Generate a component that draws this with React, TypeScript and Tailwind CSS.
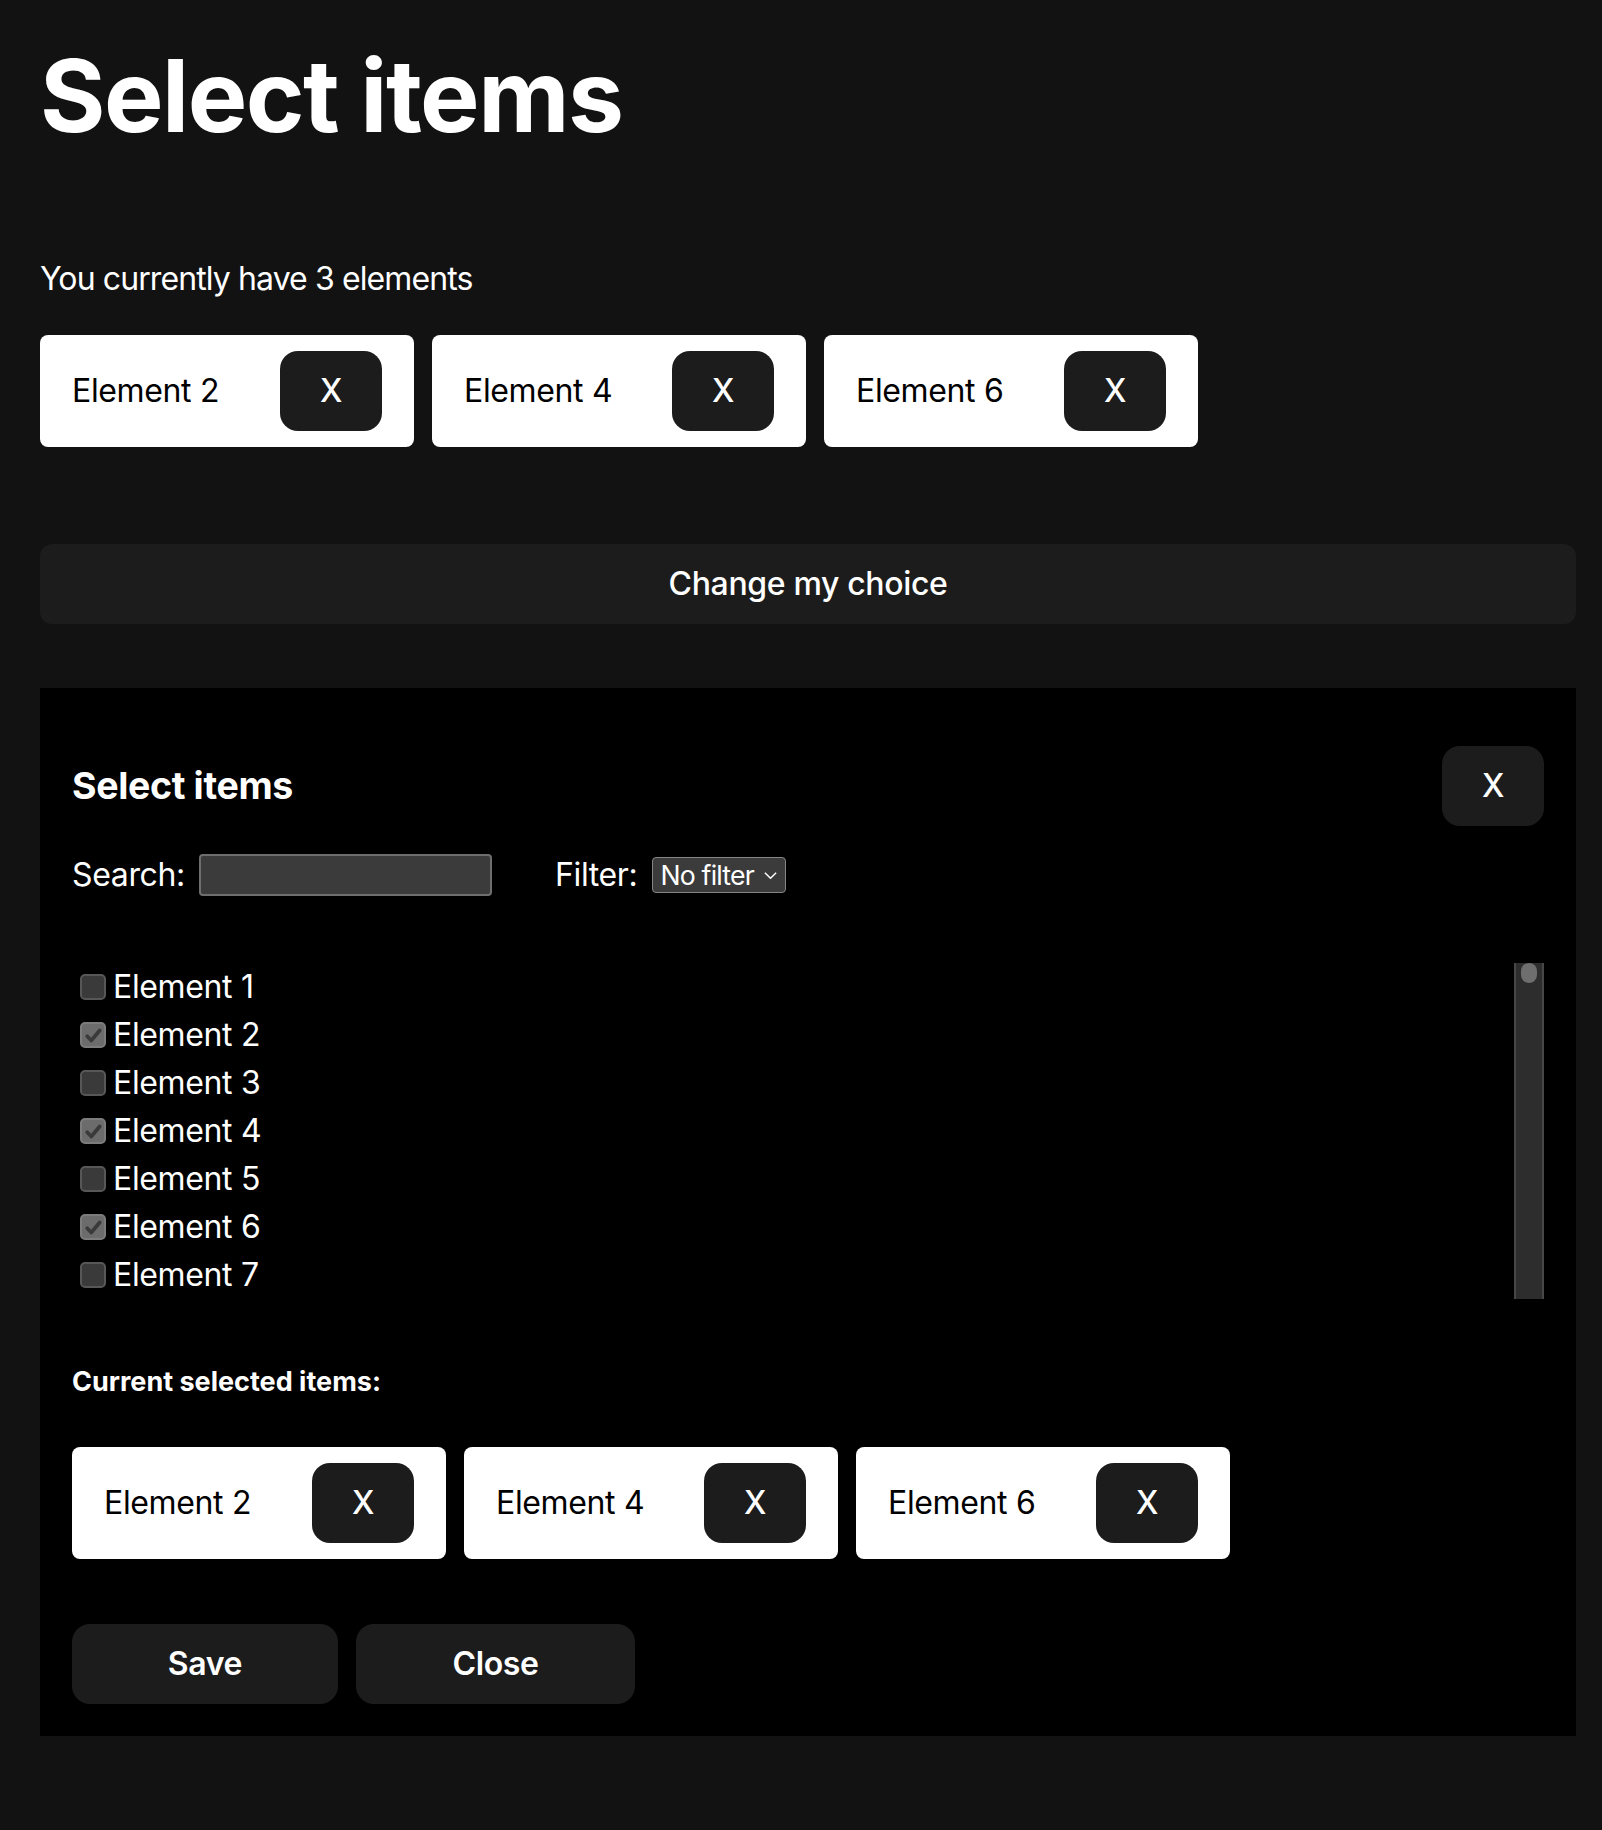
import { useState } from "react";

const chosen = ["Element 2", "Element 4", "Element 6"];
const listItems = Array.from({ length: 7 }, (_, i) => `Element ${i + 1}`);

function Chip({ label }: { label: string }) {
    return (
        <div className="flex h-[112px] w-[374px] items-center justify-between rounded-lg bg-white py-4 pr-8 pl-8">
            <span className="text-[32px] leading-12 text-black">{label}</span>
            <button
                type="button"
                className="flex h-[80px] w-[102px] items-center justify-center rounded-[18px] bg-[#1c1c1c] text-[32px] font-medium text-white"
            >
                X
            </button>
        </div>
    );
}

function Checkbox({ checked }: { checked: boolean }) {
    if (checked) {
        return (
            <span className="ml-2 mr-[7px] flex h-[26px] w-[26px] items-center justify-center rounded-[5px] border-2 border-[#7c7c7c] bg-[#6c6c6c]">
                <svg viewBox="0 0 16 16" className="h-[21px] w-[21px]" fill="none">
                    <path d="M3.2 8.6l3.1 3.2 6.4-7.6" stroke="#3a3a3a" strokeWidth={2.8} strokeLinecap="round" strokeLinejoin="round" />
                </svg>
            </span>
        );
    }
    return (
        <span className="ml-2 mr-[7px] h-[26px] w-[26px] rounded-[5px] border-2 border-[#575757] bg-[#3a3a3a]" />
    );
}

export default function App() {
    const [search, setSearch] = useState("");

    return (
        <div className="min-h-screen bg-[#121212] pb-[94px] font-['Inter','Noto_Sans',sans-serif] tracking-[-0.022em] text-white">
            <div className="ml-10 w-[1536px] pt-9">
                <h1 className="text-[100px] leading-[120px] font-bold tracking-[-0.015em]">Select items</h1>

                <p className="mt-[99px] text-[32px] leading-12 tracking-[-0.028em]">You currently have 3 elements</p>

                <div className="mt-8 flex gap-[18px]">
                    {chosen.map((c) => (
                        <Chip key={c} label={c} />
                    ))}
                </div>

                <button
                    type="button"
                    className="mt-[97px] flex h-[80px] w-full items-center justify-center rounded-xl bg-[#1c1c1c] text-[32px] font-medium"
                >
                    Change my choice
                </button>

                <div className="mt-16 bg-black px-8 pt-[58px] pb-8">
                    <div className="flex h-[80px] items-center justify-between">
                        <h3 className="text-[37.5px] font-bold">Select items</h3>
                        <button
                            type="button"
                            className="flex h-[80px] w-[102px] items-center justify-center rounded-[18px] bg-[#1c1c1c] text-[32px] font-medium"
                        >
                            X
                        </button>
                    </div>

                    <div className="mt-[25px] flex h-12 items-center text-[32px]">
                        <span>Search:</span>
                        <input
                            value={search}
                            onChange={(e) => setSearch(e.target.value)}
                            className="ml-[14px] h-[42px] w-[293px] rounded-[4px] border-2 border-[#6e6e6e] bg-[#3b3b3b] px-2 text-[26px] text-white outline-none"
                        />
                        <span className="ml-[63px]">Filter:</span>
                        <div className="ml-[15px] flex h-[36px] w-[134px] items-center justify-between rounded-[4px] border border-[#858585] bg-[#3b3b3b] pr-[7px] pl-[7px] text-[26.67px] leading-none tracking-[-0.03em] whitespace-nowrap">
                            <span>No filter</span>
                            <svg viewBox="0 0 12 8" className="h-[9px] w-[15px]" fill="none">
                                <path d="M1 1.5l5 5 5-5" stroke="#ffffff" strokeWidth={1.3} />
                            </svg>
                        </div>
                    </div>

                    <div className="mt-16 flex h-[336px]">
                        <div className="flex-1 overflow-hidden">
                            {listItems.map((item) => (
                                <label key={item} className="flex h-12 items-center text-[32px]">
                                    <Checkbox checked={chosen.includes(item)} />
                                    <span>{item}</span>
                                </label>
                            ))}
                        </div>
                        <div className="flex w-[30px] justify-center border-x-2 border-[#474747] bg-[#2d2d2d]">
                            <div className="h-[20px] w-[16px] rounded-full bg-[#6e6e6e]" />
                        </div>
                    </div>

                    <h5 className="mt-[63px] text-[27px] leading-10 font-bold tracking-normal">Current selected items:</h5>

                    <div className="mt-[45px] flex gap-[18px]">
                        {chosen.map((c) => (
                            <Chip key={c} label={c} />
                        ))}
                    </div>

                    <div className="mt-[65px] flex gap-[18px]">
                        <button type="button" className="h-[80px] w-[266px] rounded-[18px] bg-[#1c1c1c] text-[32px] font-semibold">
                            Save
                        </button>
                        <button type="button" className="h-[80px] w-[279px] rounded-[18px] bg-[#1c1c1c] text-[32px] font-semibold">
                            Close
                        </button>
                    </div>
                </div>
            </div>
        </div>
    );
}
